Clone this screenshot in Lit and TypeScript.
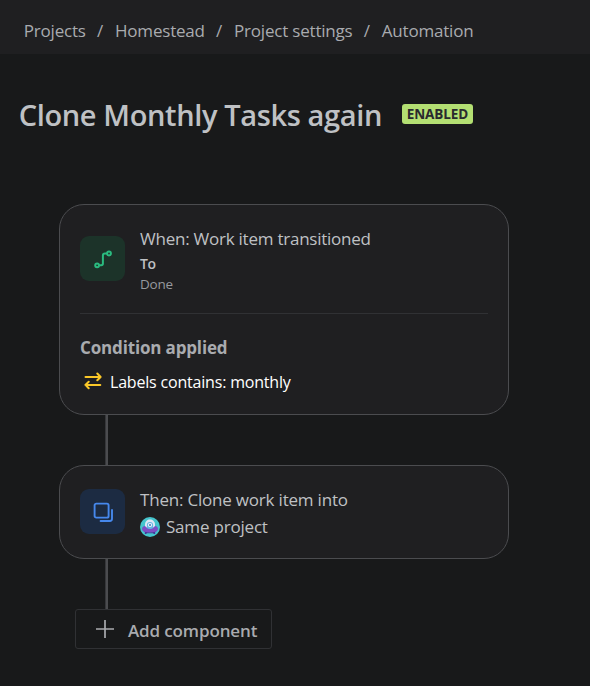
import { LitElement, html, css, svg } from "lit";
import { customElement } from "lit/decorators.js";

const transitionIcon = svg`
  <svg width="20" height="20" viewBox="0 0 20 20" fill="none" stroke="currentColor" stroke-width="2" stroke-linecap="round">
    <circle cx="4.1" cy="16.3" r="1.9"></circle>
    <circle cx="16" cy="4.5" r="1.9"></circle>
    <path d="M6.3 16.3H8.2Q9.9 16.3 9.9 14.6V6.6Q9.9 4.6 11.9 4.6H13.8"></path>
  </svg>`;

const cloneIcon = svg`
  <svg width="20" height="20" viewBox="0 0 20 20" fill="none" stroke="currentColor" stroke-width="1.9" stroke-linecap="round">
    <rect x="1.6" y="1.6" width="14" height="14" rx="1.7"></rect>
    <path d="M19 8V16.8Q19 19 16.8 19H7.6"></path>
  </svg>`;

const swapIcon = svg`
  <svg width="18" height="18" viewBox="0 0 18 18" fill="none" stroke="currentColor" stroke-width="2" stroke-linecap="round" stroke-linejoin="round">
    <path d="M1.5 5H16.3M13.3 1.5L16.6 5L13.3 8.2"></path>
    <path d="M16.3 12.9H1.6M4.7 9.8L1.4 12.9L4.7 16.2"></path>
  </svg>`;

const projectAvatar = svg`
  <svg width="20" height="20" viewBox="0 0 20 20">
    <circle cx="10" cy="10" r="10" fill="#45c5cd"></circle>
    <path d="M5 14L4.8 17H6.4L7 15M15 14L15.2 17H13.6L13 15" fill="#4b3599"></path>
    <path d="M5 10.5V7.6C5 4.6 7.2 2.5 10 2.5S15 4.6 15 7.6V10.5Z" fill="#dfe8f5"></path>
    <path d="M2 12.2Q2 9.3 5 9.1Q6.5 11.8 10 11.8T15 9.1Q18 9.3 18 12.2Q17.6 15.8 10 15.8T2 12.2Z" fill="#7d4fc4"></path>
    <path d="M4.6 14.8Q10 16.3 15.4 14.8L14.6 16.2H5.4Z" fill="#4b3599"></path>
    <path d="M6.9 11V8A3.1 3.1 0 0 1 13.1 8V11Q10 12.8 6.9 11Z" fill="#65b5e4"></path>
    <circle cx="10" cy="8" r="2.1" fill="#f1f6fb"></circle>
    <circle cx="10" cy="8" r="1.1" fill="#4384bd"></circle>
  </svg>`;

const plusIcon = svg`
  <svg width="18" height="18" viewBox="0 0 18 18" fill="none" stroke="currentColor" stroke-width="1.7">
    <path d="M9 0V18M0 9H18"></path>
  </svg>`;

@customElement("app-root")
export class AppRoot extends LitElement {
  static styles = css`
    :host {
      display: block;
      height: 686px;
      overflow: hidden;
      box-sizing: border-box;
      background: #18191a;
      color: #bfc1c4;
      font: 17px "Open Sans", "Noto Sans", sans-serif;
      white-space: nowrap;
    }
    * { box-sizing: border-box; }
    svg { display: block; flex: none; }
    .crumbs {
      display: flex;
      height: 54px;
      padding: 7px 0 0 23.8px;
      background: #1f1f21;
      color: #a9abaf;
      line-height: 47px;
      letter-spacing: -0.2px;
    }
    .sep { margin: 0 12px 0 11.2px; }
    .title-row {
      display: flex;
      height: 150px;
      padding: 41px 0 0 18.7px;
    }
    h1 {
      margin: 0;
      width: 383.3px;
      font-size: 29px;
      font-weight: 600;
      line-height: 40px;
      letter-spacing: -0.37px;
    }
    .badge {
      width: 71px;
      height: 20px;
      margin-top: 9px;
      border-radius: 3px;
      background: #b3df72;
      color: #292a2e;
      font-size: 13.5px;
      font-weight: 700;
      line-height: 21px;
      text-align: center;
      letter-spacing: -0.1px;
    }
    .flow { padding-left: 59px; }
    .card {
      width: 450px;
      padding: 20px 20px 0;
      border: 1px solid #4b4c4f;
      border-radius: 25px;
      background: #1f1f21;
    }
    .trigger { height: 211px; padding-top: 21px; }
    .action { height: 94px; }
    .head { display: flex; gap: 15px; }
    .tile {
      display: grid;
      place-items: center;
      width: 45px;
      height: 45px;
      border-radius: 9px;
      flex: none;
    }
    .green { margin-top: 10px; background: #1c3329; color: #2abb7f; }
    .blue { margin-top: 3px; background: #1c2b42; color: #4688ec; }
    .when { line-height: 25px; letter-spacing: -0.24px; }
    .field { font-size: 14px; font-weight: 600; line-height: 25px; letter-spacing: -0.3px; }
    .value { font-size: 13.5px; line-height: 16px; letter-spacing: -0.2px; color: #96999e; }
    .rule { height: 1px; margin-top: 21px; background: #303134; }
    h2 {
      margin: 21px 0 12px;
      font-size: 17px;
      font-weight: 700;
      line-height: 25px;
      letter-spacing: -0.16px;
      color: #a9abaf;
    }
    .condition {
      display: flex;
      align-items: center;
      gap: 8px;
      padding-left: 4px;
      color: #fff;
      font-size: 16px;
      line-height: 20px;
      letter-spacing: -0.19px;
    }
    .swap { color: #fbc828; margin-top: -2px; }
    .then { line-height: 27px; letter-spacing: -0.2px; }
    .project {
      display: flex;
      align-items: center;
      gap: 6px;
      line-height: 27px;
      letter-spacing: -0.2px;
    }
    .link {
      width: 3px;
      height: 50px;
      margin-left: 46px;
      background: linear-gradient(to right, #36373a 1px, #4b4c4f 1px);
    }
    .add {
      display: flex;
      align-items: center;
      gap: 14px;
      width: 197px;
      height: 40px;
      margin-left: 16px;
      padding: 0 0 0 20px;
      border: 1px solid #303134;
      border-radius: 3px;
      background: none;
      color: #a9abaf;
      font: 600 17px/40px "Open Sans", "Noto Sans", sans-serif;
      letter-spacing: -0.13px;
    }
    .add span { margin-top: 3px; }
  `;

  render() {
    const path = ["Projects", "Homestead", "Project settings", "Automation"];
    return html`
      <nav class="crumbs">
        ${path.map((name, i) => html`${i ? html`<span class="sep">/</span>` : ""}<span>${name}</span>`)}
      </nav>
      <header class="title-row">
        <h1>Clone Monthly Tasks again</h1>
        <span class="badge">ENABLED</span>
      </header>
      <main class="flow">
        <section class="card trigger">
          <div class="head">
            <div class="tile green">${transitionIcon}</div>
            <div>
              <div class="when">When: Work item transitioned</div>
              <div class="field">To</div>
              <div class="value">Done</div>
            </div>
          </div>
          <div class="rule"></div>
          <h2>Condition applied</h2>
          <div class="condition"><span class="swap">${swapIcon}</span><span>Labels contains: monthly</span></div>
        </section>
        <div class="link"></div>
        <section class="card action">
          <div class="head">
            <div class="tile blue">${cloneIcon}</div>
            <div>
              <div class="then">Then: Clone work item into</div>
              <div class="project">${projectAvatar}<span>Same project</span></div>
            </div>
          </div>
        </section>
        <div class="link"></div>
        <button class="add">${plusIcon}<span>Add component</span></button>
      </main>
    `;
  }
}
